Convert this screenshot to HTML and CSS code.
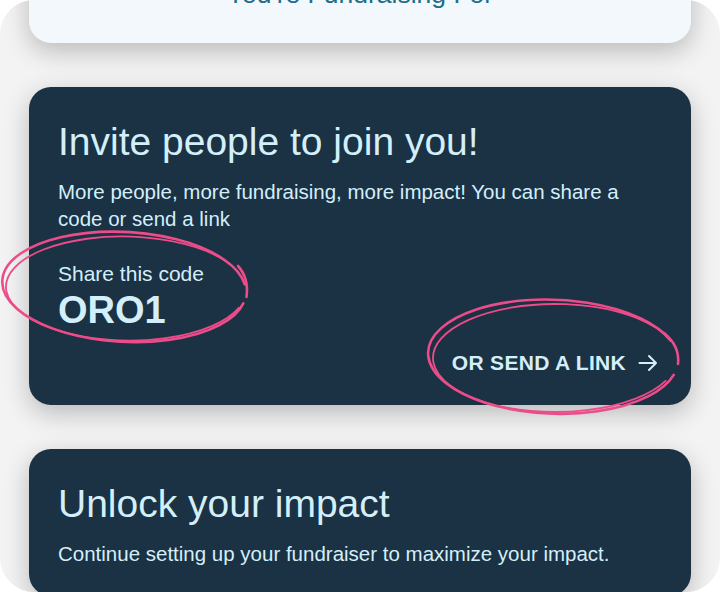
FILE: index.html
```html
<!DOCTYPE html>
<html lang="en">
<head>
<meta charset="utf-8">
<title>Fundraiser</title>
<link rel="stylesheet" href="styles.css">
</head>
<body>
<div class="frame">
  <div class="stack">
    <section class="card card-light">
      <h2 class="for-title">You're Fundraising For</h2>
    </section>

    <section class="card card-dark">
      <h1 class="card-title">Invite people to join you!</h1>
      <p class="card-text">More people, more fundraising, more impact! You can share a code or send a link</p>
      <div class="code-block">
        <div class="code-label">Share this code</div>
        <div class="code-value">ORO1</div>
      </div>
      <div class="link-row">
        <a class="send-link" href="#">OR SEND A LINK
          <svg class="arrow" width="20" height="20" viewBox="0 0 20 20" aria-hidden="true">
            <path d="M1.5 10 H18 M11 3 L18 10 L11 17" fill="none" stroke="currentColor" stroke-width="2" stroke-linecap="round" stroke-linejoin="round"/>
          </svg>
        </a>
      </div>
    </section>

    <section class="card card-dark">
      <h1 class="card-title">Unlock your impact</h1>
      <p class="card-text">Continue setting up your fundraiser to maximize your impact.</p>
    </section>
  </div>

  <svg class="marks" width="720" height="592" viewBox="0 0 720 592" aria-hidden="true">
    <g fill="none" stroke="#ec4c89" stroke-width="2.6" stroke-linecap="round">
      <path d="M244.8 284.3 A122 55 3 1 0 243.3 303.4"/>
      <path d="M229.9 264 A120 52 1 1 0 238.8 307.8" stroke-width="1.8"/>
      <path d="M238 266 Q249 278 246.5 297"/>
      <path d="M670.5 340.5 A125 57 2 1 0 673.7 374.8"/>
      <path d="M654.9 327 A122 54 0 1 0 665.6 380.8" stroke-width="1.8"/>
      <path d="M664 333 Q680 346 678 364"/>
    </g>
  </svg>
</div>
</body>
</html>
```

FILE: styles.css
```css
html, body {
  margin: 0;
  padding: 0;
  background: #ffffff;
}

body {
  font-family: "Liberation Sans", Arial, Helvetica, sans-serif;
}

.frame {
  position: relative;
  width: 720px;
  height: 592px;
  border-radius: 34px;
  overflow: hidden;
  background: #f3f3f3;
}

.stack {
  display: flex;
  flex-direction: column;
  gap: 44px;
  padding: 0 29px;
  margin-top: -51px;
}

.card {
  border-radius: 22px;
  box-shadow: 0 8px 26px rgba(0, 0, 0, 0.24);
}

.card-light {
  background: #f2f8fb;
  padding: 30px 29px 34px;
}

.for-title {
  margin: 0;
  text-align: center;
  font-weight: 400;
  font-size: 26.5px;
  line-height: 30px;
  color: #1d6e88;
}

.card-dark {
  background: #1b3144;
  color: #d3effa;
  padding: 32px 33px 29px 29px;
}

.card-title {
  margin: 0;
  font-weight: 400;
  font-size: 39px;
  line-height: 45px;
  color: #d3effa;
}

.card-text {
  margin: 14px 0 0;
  font-size: 20.5px;
  line-height: 27px;
  color: #d3effa;
}

.code-block {
  margin-top: 28px;
}

.code-label {
  font-size: 21px;
  line-height: 27px;
}

.code-value {
  margin-top: 1px;
  font-size: 38px;
  font-weight: 700;
  line-height: 44px;
}

.link-row {
  display: flex;
  justify-content: flex-end;
  margin-top: 17px;
}

.send-link {
  display: flex;
  align-items: center;
  gap: 12px;
  color: #d3effa;
  text-decoration: none;
  font-size: 21px;
  font-weight: 700;
  line-height: 27px;
  letter-spacing: 0.3px;
}

.arrow {
  display: block;
}

.marks {
  position: absolute;
  left: 0;
  top: 0;
  pointer-events: none;
}
```
